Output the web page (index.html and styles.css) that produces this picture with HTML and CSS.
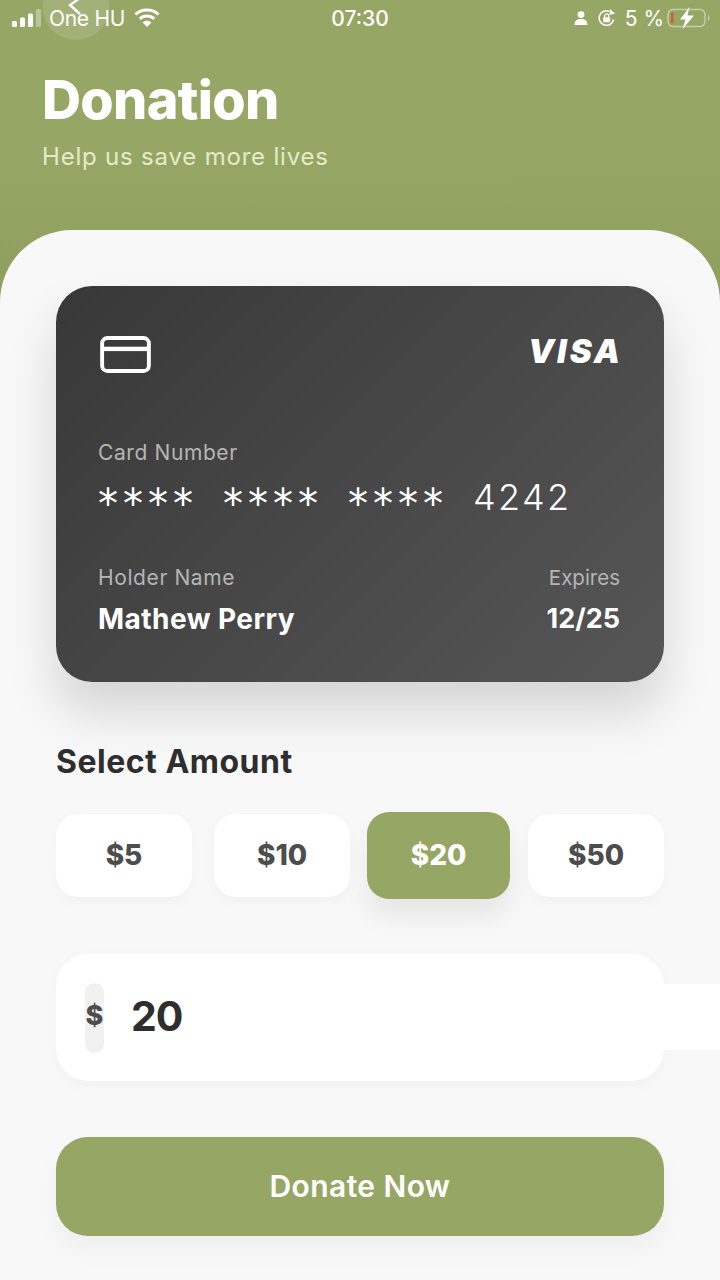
FILE: index.html
```html
<!DOCTYPE html>
<html lang="en">
<head>
    <meta charset="UTF-8">
    <meta name="viewport" content="width=device-width, initial-scale=1.0">
    <title>Donation</title>
    <link rel="stylesheet" href="styles.css">
</head>
<body>
    <div id="app">
        <div class="back-ripple"></div>
        <svg class="back-arrow" width="16" height="20" viewBox="0 0 16 20"><path d="M13 -2 L3 5 L13 14" fill="none" stroke="#fff" stroke-width="2.4"/></svg>

        <div class="status-bar">
            <div class="status-left">
                <svg width="30" height="18" viewBox="0 0 30 18">
                    <rect x="0" y="12" width="5" height="6" rx="1.5" fill="#fff"/>
                    <rect x="8" y="8.5" width="5" height="9.5" rx="1.5" fill="#fff"/>
                    <rect x="16" y="4.5" width="5" height="13.5" rx="1.5" fill="#fff"/>
                    <rect x="24" y="0" width="5" height="18" rx="1.5" fill="#fff" fill-opacity="0.35"/>
                </svg>
                <span class="carrier">One HU</span>
                <svg class="wifi" width="26" height="19" viewBox="0 0 26 19">
                    <path d="M1.5 6.5 C7.5 0.5 18.5 0.5 24.5 6.5" fill="none" stroke="#fff" stroke-width="3"/>
                    <path d="M5.8 10.8 C9.8 7 16.2 7 20.2 10.8" fill="none" stroke="#fff" stroke-width="3"/>
                    <path d="M13 19 L8.6 14.5 C11 12.3 15 12.3 17.4 14.5 Z" fill="#fff"/>
                </svg>
            </div>
            <div class="status-time">07:30</div>
            <div class="status-right">
                <svg width="14" height="14" viewBox="0 0 14 14">
                    <circle cx="7" cy="3.6" r="3.4" fill="#fff"/>
                    <path d="M0.5 14 C0.5 9.5 3.5 8 7 8 C10.5 8 13.5 9.5 13.5 14 Z" fill="#fff"/>
                </svg>
                <svg class="lock-icon" width="18" height="18" viewBox="0 0 18 18">
                    <path d="M15.6 10.5 A7.3 7.3 0 1 1 11.5 2.4" fill="none" stroke="#fff" stroke-width="1.5"/>
                    <path d="M12 0 L17 4.5 L11.5 6 Z" fill="#fff"/>
                    <rect x="5.2" y="8.2" width="7" height="5" rx="1" fill="#fff"/>
                    <path d="M6.7 8.2 V6.8 A2 2 0 0 1 10.7 6.8 V8.2" fill="none" stroke="#fff" stroke-width="1.2"/>
                </svg>
                <span class="battery-text">5 %</span>
                <svg width="44" height="22" viewBox="0 0 44 22">
                    <rect x="1" y="2.5" width="37" height="17" rx="5" fill="none" stroke="#fff" stroke-opacity="0.45" stroke-width="1.5"/>
                    <rect x="4" y="5.5" width="2.4" height="11" rx="1" fill="#d9563a"/>
                    <path d="M41 8 C43 9 43 13 41 14 Z" fill="#fff" fill-opacity="0.45"/>
                    <path d="M22.5 0 L13 12.5 H18.5 L15.5 22 L27 8.5 H20.5 Z" fill="#fff"/>
                </svg>
            </div>
        </div>

        <div class="header">
            <h1>Donation</h1>
            <p>Help us save more lives</p>
        </div>

        <div class="sheet">
            <div class="card">
                <div class="card-top">
                    <svg class="card-icon" width="51" height="37" viewBox="0 0 52 38">
                        <rect x="2" y="2" width="48" height="34" rx="5.5" fill="none" stroke="#fff" stroke-width="4"/>
                        <rect x="2" y="11" width="48" height="4.5" fill="#fff"/>
                    </svg>
                    <span class="visa">VISA</span>
                </div>
                <div class="card-label">Card Number</div>
                <div class="card-number">
                    <span class="stars">****</span><span class="stars">****</span><span class="stars">****</span><span class="digits">4242</span>
                </div>
                <div class="card-bottom">
                    <div>
                        <div class="card-label">Holder Name</div>
                        <div class="card-value holder">Mathew Perry</div>
                    </div>
                    <div class="card-expires">
                        <div class="card-label">Expires</div>
                        <div class="card-value">12/25</div>
                    </div>
                </div>
            </div>

            <h2>Select Amount</h2>
            <div class="amounts">
                <button class="amount">$5</button>
                <button class="amount">$10</button>
                <button class="amount active">$20</button>
                <button class="amount">$50</button>
            </div>

            <div class="amount-input">
                <span class="currency">$</span>
                <span class="value">20</span>
            </div>

            <button class="donate">Donate Now</button>
        </div>
    </div>
</body>
</html>
```

FILE: styles.css
```css
* {
    box-sizing: border-box;
}
body {
    margin: 0;
    font-family: 'Inter', 'Liberation Sans', sans-serif;
    color: #2e2e2e;
}
#app {
    position: relative;
    width: 720px;
    height: 1280px;
    overflow: hidden;
    background: linear-gradient(180deg, #96a765 0, #96a765 150px, #8d9e5e 300px);
}
.back-ripple {
    position: absolute;
    left: 43px;
    top: -25px;
    width: 66px;
    height: 65px;
    border-radius: 50%;
    background: rgba(255,255,255,0.12);
}
.back-arrow {
    position: absolute;
    left: 67px;
    top: 0;
}
.status-bar {
    display: flex;
    align-items: center;
    justify-content: space-between;
    height: 36px;
    padding: 0 9px 0 12px;
    color: #fff;
    font-size: 20px;
    position: relative;
}
.status-left, .status-right {
    display: flex;
    align-items: center;
    width: 240px;
}
.status-left {
    gap: 7px;
}
.status-left .carrier {
    font-size: 21px;
    letter-spacing: -0.3px;
}
.wifi {
    margin: -2px 0 0 2px;
}
.status-time {
    font-size: 21px;
    font-weight: 500;
    margin-left: -3px;
}
.status-right {
    justify-content: flex-end;
    gap: 8px;
}
.lock-icon {
    margin: 0 1px 0 2px;
}
.battery-text {
    font-size: 21px;
    margin-right: -5px;
    white-space: pre;
}
.header {
    padding: 34px 42px 0;
    height: 194px;
}
.header h1 {
    margin: 0;
    color: #fff;
    font-size: 54px;
    font-weight: 800;
    line-height: 60px;
    letter-spacing: -0.7px;
}
.header p {
    margin: 12px 0 0;
    color: #e3ebc9;
    font-size: 24px;
    line-height: 30px;
    letter-spacing: 0.8px;
}
.sheet {
    height: 1050px;
    background: #f8f8f8;
    border-radius: 72px 72px 0 0;
    padding: 56px 56px 0;
}
.card {
    height: 396px;
    padding: 50px 44px 0 42px;
    border-radius: 36px;
    background: linear-gradient(135deg, #383838 0%, #565656 100%);
    box-shadow: 0 30px 50px rgba(0,0,0,0.14);
    color: #fff;
}
.card-top {
    display: flex;
    justify-content: space-between;
    align-items: flex-start;
    height: 104px;
}
.card-icon {
    margin-left: 2px;
}
.visa {
    margin: -1px -3px 0 0;
    font-size: 33px;
    font-weight: 900;
    font-style: italic;
    letter-spacing: 3px;
    line-height: 32px;
}
.card-label {
    font-size: 21px;
    line-height: 26px;
    color: #b5b5b5;
    letter-spacing: 0.6px;
}
.card-number {
    display: flex;
    gap: 30px;
    margin-top: 10px;
    height: 44px;
}
.stars {
    margin: 8px -5px 0 0;
    font-family: 'DejaVu Sans', sans-serif;
    font-size: 40px;
    line-height: 40px;
    letter-spacing: 5px;
}
.digits {
    margin-top: -1px;
    font-size: 36px;
    font-weight: 300;
    line-height: 44px;
    letter-spacing: 2.4px;
}
.card-bottom {
    display: flex;
    justify-content: space-between;
    margin-top: 45px;
}
.card-expires {
    text-align: right;
}
.card-expires .card-label {
    font-size: 20.5px;
    letter-spacing: 0;
}
.card-value {
    margin-top: 11px;
    font-size: 27px;
    font-weight: 700;
    line-height: 34px;
}
.holder {
    font-size: 28px;
    letter-spacing: 0.45px;
}
h2 {
    margin: 62px 0 0;
    font-size: 32px;
    font-weight: 700;
    line-height: 36px;
    letter-spacing: 0.5px;
}
.amounts {
    display: flex;
    align-items: center;
    gap: 18px;
    margin-top: 32px;
    height: 87px;
}
.amount {
    width: 136px;
    height: 83px;
    border: none;
    border-radius: 22px;
    padding: 0 0 1px;
    background: #fff;
    box-shadow: 0 4px 14px rgba(0,0,0,0.03);
    color: #4d4d4d;
    font-family: inherit;
    font-size: 28px;
    font-weight: 800;
}
.amount:nth-child(2) {
    margin-left: 4px;
}
.amount.active {
    width: 143px;
    height: 87px;
    margin-left: -1px;
    background: #96a765;
    color: #fff;
    box-shadow: 0 18px 26px rgba(0,0,0,0.07);
}
.amount-input {
    position: relative;
    display: flex;
    align-items: center;
    height: 127px;
    margin-top: 55px;
    padding-left: 29px;
    border-radius: 32px;
    background: #fff;
    box-shadow: 0 4px 14px rgba(0,0,0,0.03);
}
.amount-input::after {
    content: "";
    position: absolute;
    right: -56px;
    top: 30px;
    width: 56px;
    height: 66px;
    background: #fff;
}
.currency {
    width: 19px;
    height: 70px;
    border-radius: 10px;
    background: #f1f1f1;
    color: #4d4d4d;
    font-size: 27px;
    font-weight: 800;
    line-height: 66px;
    display: flex;
    justify-content: center;
}
.value {
    margin: 0 0 3px 27px;
    font-size: 41px;
    font-weight: 700;
    letter-spacing: -1.2px;
}
.donate {
    display: block;
    width: 100%;
    height: 99px;
    margin-top: 56px;
    padding: 0 0 2px;
    border: none;
    border-radius: 32px;
    background: #96a765;
    box-shadow: 0 14px 26px rgba(0,0,0,0.04);
    color: #fff;
    font-family: inherit;
    font-size: 30px;
    font-weight: 600;
    letter-spacing: 0.4px;
}
```
